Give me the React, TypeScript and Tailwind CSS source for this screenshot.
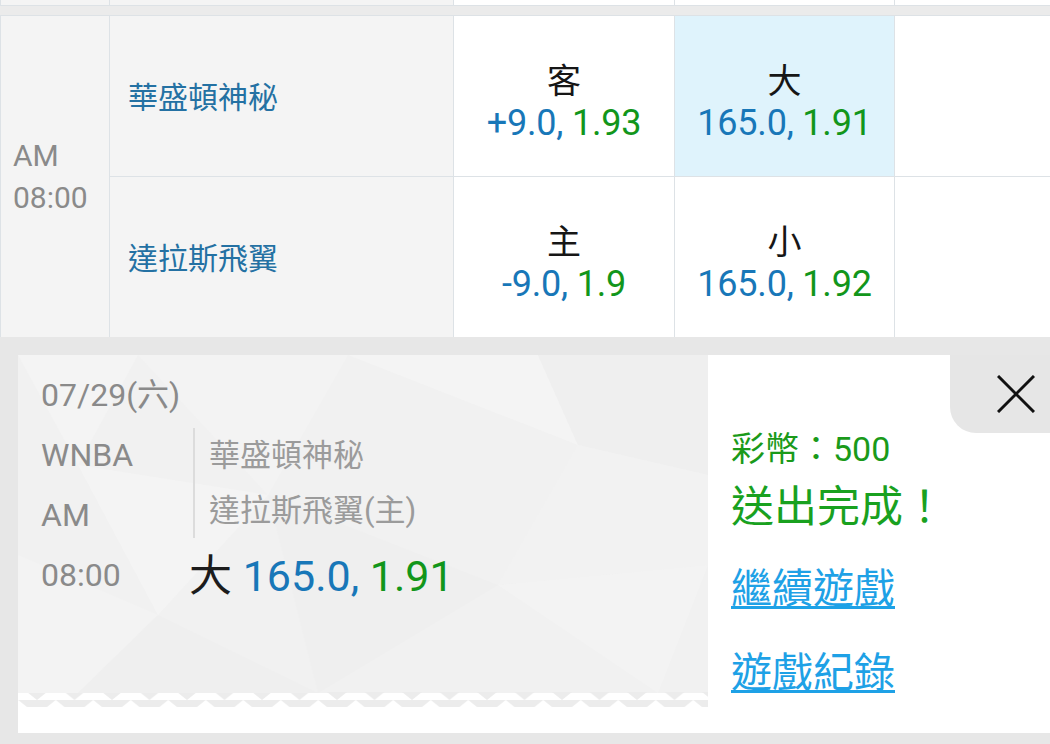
import React from 'react'

const line = 'border-[#dde2e6]'

function OddsCell(props: { label: string; spread: string; price: string; active?: boolean; wide?: boolean }) {
  return (
    <div
      className={`${props.wide ? 'w-[221px]' : 'w-[220px]'} border-r ${line} flex flex-col items-center justify-center pt-[12px] ${
        props.active ? 'bg-[#dff3fc]' : 'bg-white'
      }`}
    >
      <span className="text-[34px] leading-[42px] text-[#161616]">{props.label}</span>
      <span className="text-[36px] leading-[42px] tracking-[-0.2px]">
        <span className="text-[#1877b8]">{props.spread}, </span>
        <span className="text-[#12961b]">{props.price}</span>
      </span>
    </div>
  )
}

function TeamRow(props: { name: string; home: [string, string, string]; total: [string, string, string]; active?: boolean; last?: boolean }) {
  return (
    <div className={`flex ${props.last ? 'h-[160px]' : `h-[161px] border-b ${line}`}`}>
      <div className={`w-[344px] border-r ${line} bg-[#f4f4f4] flex items-center pl-[18px] pt-[3px] text-[30px] text-[#2471a3]`}>
        {props.name}
      </div>
      <OddsCell wide label={props.home[0]} spread={props.home[1]} price={props.home[2]} />
      <OddsCell label={props.total[0]} spread={props.total[1]} price={props.total[2]} active={props.active} />
      <div className="flex-1 bg-white" />
    </div>
  )
}

// faint low-poly background of the ticket
function TicketBg() {
  return (
    <svg className="absolute left-0 top-0" width="690" height="352" viewBox="0 0 690 352">
      <defs>
        <pattern id="zig" x="19" y="0" width="37.5" height="15" patternUnits="userSpaceOnUse">
          <path d="M0 0H37.5V15L18.75 0L0 15Z" fill="#ececec" />
        </pattern>
      </defs>
      <rect x="0" y="0" width="690" height="338" fill="#f1f1f1" />
      <rect x="0" y="337" width="690" height="15" fill="url(#zig)" />
      <polygon points="0,0 120,0 60,110" fill="#f4f4f4" />
      <polygon points="120,0 330,0 250,140" fill="#f3f3f3" />
      <polygon points="330,0 520,0 560,90" fill="#f4f4f4" />
      <polygon points="520,0 690,0 690,120 560,90" fill="#efefef" />
      <polygon points="60,110 250,140 140,260" fill="#f4f4f4" />
      <polygon points="250,140 480,230 300,338" fill="#efefef" />
      <polygon points="480,230 690,210 640,338" fill="#f3f3f3" />
      <polygon points="0,200 140,260 60,338 0,338" fill="#f3f3f3" />
      <polygon points="560,90 690,120 690,210 480,230" fill="#f2f2f2" />
      <polygon points="140,260 300,338 60,338" fill="#efefef" />
    </svg>
  )
}

export default function App() {
  return (
    <div className="w-[1050px] h-[744px] overflow-hidden bg-[#e7e7e7] font-['Roboto','Noto_Sans_CJK_TC',sans-serif]">
      {/* tail of the previous game */}
      <div className="flex h-[5px]">
        <div className={`w-[110px] border-l border-r ${line} bg-[#f4f4f4]`} />
        <div className={`w-[344px] border-r ${line} bg-[#f4f4f4]`} />
        <div className={`w-[221px] border-r ${line} bg-white`} />
        <div className={`w-[220px] border-r ${line} bg-white`} />
        <div className="flex-1 bg-white" />
      </div>
      <div className={`h-[11px] border-t border-b ${line} bg-[#ebebeb]`} />

      {/* game */}
      <div className="flex">
        <div className={`w-[110px] border-l border-r ${line} bg-[#f4f4f4] flex flex-col justify-center pl-[12px] text-[30px] leading-[42px] text-[#8a8a8a]`}>
          <span>AM</span>
          <span>08:00</span>
        </div>
        <div className="flex-1 flex flex-col">
          <TeamRow name="華盛頓神秘" home={['客', '+9.0', '1.93']} total={['大', '165.0', '1.91']} active />
          <TeamRow name="達拉斯飛翼" home={['主', '-9.0', '1.9']} total={['小', '165.0', '1.92']} last />
        </div>
      </div>

      {/* ticket */}
      <div className="ml-[18px] mt-[18px] h-[378px] flex">
        <div className="relative w-[690px] bg-white">
          <TicketBg />
          <div className="relative pl-[23px] pt-[10px]">
            <div className="text-[32px] leading-[60px] text-[#8a8a8a]">07/29(六)</div>
            <div className="flex">
              <div className="w-[148px] flex flex-col text-[32px] leading-[60px] text-[#8a8a8a]">
                <span>WNBA</span>
                <span>AM</span>
                <span>08:00</span>
              </div>
              <div className="flex flex-col">
                <div className="mt-[3px] ml-[4px] border-l-2 border-[#dcdcdc] pl-[14px] text-[31px] leading-[55px] text-[#9b9b9b]">
                  <div>華盛頓神秘</div>
                  <div>達拉斯飛翼(主)</div>
                </div>
                <div className="mt-[8px] text-[43px] leading-[60px] whitespace-nowrap">
                  <span className="text-[#1c1c1c]">大 </span>
                  <span className="text-[#1877b8]">165.0, </span>
                  <span className="text-[#12961b]">1.91</span>
                </div>
              </div>
            </div>
          </div>
        </div>

        <div className="relative flex-1 bg-white pl-[23px] pt-[70px] flex flex-col items-start">
          <div className="text-[34px] leading-[48px] text-[#1a9a1a]">彩幣：500</div>
          <div className="mt-[5px] text-[43px] leading-[58px] text-[#19a11f]">送出完成！</div>
          <a href="#" className="mt-[24px] text-[41px] leading-[58px] text-[#1ea1e6] underline decoration-[3px] underline-offset-[3px]">
            繼續遊戲
          </a>
          <a href="#" className="mt-[26px] text-[41px] leading-[58px] text-[#1ea1e6] underline decoration-[3px] underline-offset-[3px]">
            遊戲紀錄
          </a>
          <button className="absolute right-0 top-0 w-[100px] h-[78px] rounded-bl-[26px] bg-[#e6e6e6] flex items-center justify-end pr-[15px]">
            <svg width="38" height="38" viewBox="0 0 38 38">
              <path d="M1 1L37 37M37 1L1 37" stroke="#111" strokeWidth="3" />
            </svg>
          </button>
        </div>
      </div>
    </div>
  )
}
